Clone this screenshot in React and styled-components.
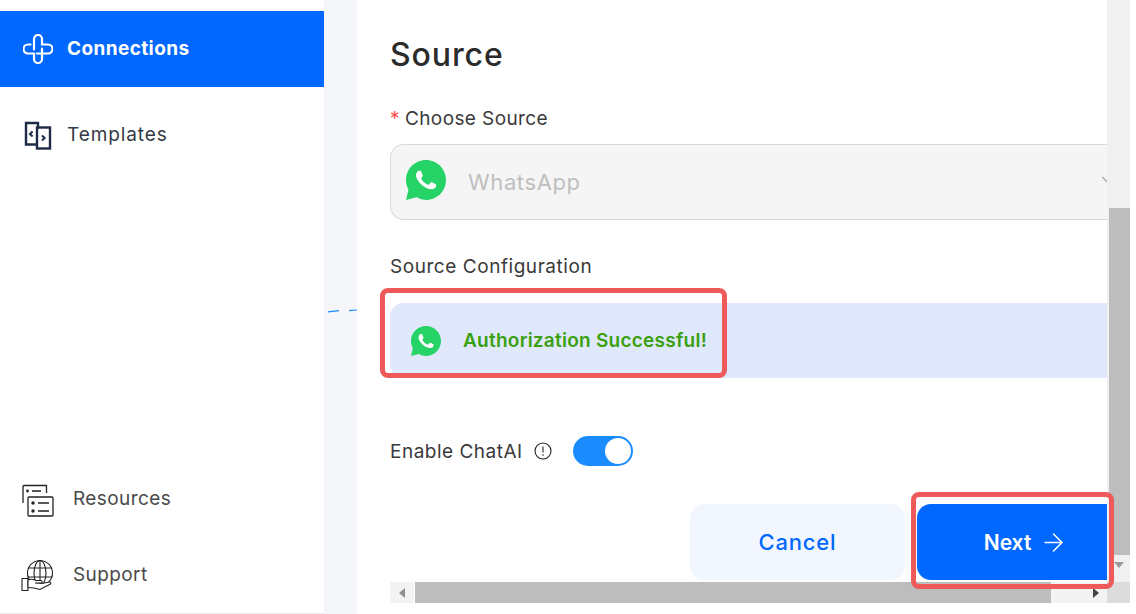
import React from "react";
import styled, { createGlobalStyle } from "styled-components";
import { ArrowRight, ChevronDown } from "lucide-react";

const GlobalStyle = createGlobalStyle`
  html, body {
    margin: 0;
    padding: 0;
    background: #fff;
    overflow: hidden;
  }
  * { box-sizing: border-box; }
`;

const font = `Inter, "Open Sans", "Liberation Sans", sans-serif`;

const WhatsAppIcon = ({ size }) => (
  <svg width={size} height={size} viewBox="0 0 24 24">
    <path
      fill="#25d366"
      d="M12 0C5.373 0 0 5.373 0 12c0 2.117.55 4.1 1.51 5.83L0 24l6.3-1.65A11.95 11.95 0 0 0 12 24c6.627 0 12-5.373 12-12S18.627 0 12 0z"
    />
    <path
      fill="#fff"
      d="M17.472 14.382c-.297-.149-1.758-.867-2.03-.967-.273-.099-.471-.148-.67.15-.197.297-.767.966-.94 1.164-.173.199-.347.223-.644.075-.297-.15-1.255-.463-2.39-1.475-.883-.788-1.48-1.761-1.653-2.059-.173-.297-.018-.458.13-.606.134-.133.298-.347.446-.52.149-.174.198-.298.298-.497.099-.198.05-.371-.025-.52-.075-.149-.669-1.612-.916-2.207-.242-.579-.487-.5-.669-.51-.173-.008-.371-.01-.57-.01-.198 0-.52.074-.792.372-.272.297-1.04 1.016-1.04 2.479 0 1.462 1.065 2.875 1.213 3.074.149.198 2.096 3.2 5.077 4.487.709.306 1.262.489 1.694.625.712.227 1.36.195 1.871.118.571-.085 1.758-.719 2.006-1.413.248-.694.248-1.289.173-1.413-.074-.124-.272-.198-.57-.347"
    />
  </svg>
);

const ConnectionsIcon = () => (
  <svg width="30" height="30" viewBox="0 0 30 30" fill="none" stroke="#fff" strokeWidth="2.200" strokeLinecap="round">
    <path d="M11 15.500V5a4 4 0 0 1 8 0v5.500h6a4.500 4.500 0 0 1 0 9H14" />
    <path d="M19 14.500V25a4 4 0 0 1-8 0v-5.500H5a4.500 4.500 0 0 1 0-9h2.500" />
  </svg>
);

const TemplatesIcon = () => (
  <svg width="28" height="29" viewBox="0 0 28 29" fill="none" stroke="#1d2b45" strokeWidth="2.400">
    <path d="M13 23.500H2V2h12v6" />
    <rect x="13" y="6.500" width="13" height="21" />
    <path d="M8.600 10.500 6 13l2.600 2.500M18 14.500l2.600 2.500-2.600 2.500" strokeWidth="2" />
  </svg>
);

const ResourcesIcon = () => (
  <svg width="33" height="33" viewBox="0 0 33 33" fill="none" stroke="#222" strokeWidth="1.300">
    <path d="M2 19V2.500c0-.5.3-1 1-1h22.500V9" />
    <rect x="7" y="13" width="25" height="19" rx="1" />
    <path d="M11 7h9M17 19h11M17 27h11" strokeWidth="1.500" />
    <circle cx="6.500" cy="7" r="1.400" fill="#222" stroke="none" />
    <circle cx="12" cy="19" r="1.700" fill="#222" stroke="none" />
    <circle cx="12" cy="27" r="1.700" fill="#222" stroke="none" />
  </svg>
);

const SupportIcon = () => (
  <svg width="34" height="34" viewBox="0 0 34 34" fill="none" stroke="#222" strokeWidth="1.100">
    <circle cx="19" cy="13" r="12.500" />
    <ellipse cx="19" cy="13" rx="6" ry="12.500" />
    <path d="M19 .5v25M7 8h24M6.500 17h25" />
    <path fill="#fff" d="M1 18.500h6v12H1z" />
    <path fill="#fff" d="M7 20c3-1.500 6-.5 8 .5h5c1.500 0 1.500 2.500 0 2.500h-6l7 .5 7-1.500c2-.3 2.500 1.300 1 2.200l-10 5.300-6-1.500-6-.5z" />
  </svg>
);

const InfoIcon = () => (
  <svg width="18" height="18" viewBox="0 0 18 18" fill="none" stroke="#222" strokeWidth="1.100">
    <circle cx="9" cy="9" r="8" />
    <path d="M9 4.500v6" />
    <circle cx="9" cy="13" r=".8" fill="#222" stroke="none" />
  </svg>
);

const App = () => {
  return (
    <Stage>
      <GlobalStyle />
      <Sidebar>
        <NavGroup>
          <NavItem $active>
            <IconSlot $left={23}>
              <ConnectionsIcon />
            </IconSlot>
            <NavLabel>Connections</NavLabel>
          </NavItem>
          <NavItem>
            <IconSlot $left={24}>
              <TemplatesIcon />
            </IconSlot>
            <NavLabel $spacing={0.9}>Templates</NavLabel>
          </NavItem>
        </NavGroup>
        <NavGroup>
          <NavItem $lower>
            <IconSlot $left={21} $lower>
              <ResourcesIcon />
            </IconSlot>
            <NavLabel>Resources</NavLabel>
          </NavItem>
          <NavItem $lower>
            <IconSlot $left={21} $lower>
              <SupportIcon />
            </IconSlot>
            <NavLabel>Support</NavLabel>
          </NavItem>
        </NavGroup>
      </Sidebar>

      <Gutter>
        <svg width="33" height="4" viewBox="0 0 33 4">
          <path d="M4 2.800 15 1.700M25 1.700 33 1" stroke="#1a8cff" strokeWidth="1.200" />
        </svg>
      </Gutter>

      <Workspace>
        <WorkRow>
          <Panel>
            <Title>Source</Title>
            <FieldLabel>
              <Required>*</Required>Choose Source
            </FieldLabel>
            <SelectBox>
              <WhatsAppIcon size={40} />
              <SelectText>WhatsApp</SelectText>
              <SelectArrow>
                <ChevronDown size={22} strokeWidth={1.500} />
              </SelectArrow>
            </SelectBox>
            <ConfigLabel>Source Configuration</ConfigLabel>
            <AuthBanner>
              <WhatsAppIcon size={30} />
              <AuthText>Authorization Successful!</AuthText>
            </AuthBanner>
            <ToggleRow>
              <ToggleLabel>Enable ChatAI</ToggleLabel>
              <InfoIcon />
              <Toggle>
                <Knob />
              </Toggle>
            </ToggleRow>
            <Actions>
              <CancelButton>Cancel</CancelButton>
              <NextButton>
                Next
                <ArrowRight size={29} strokeWidth={1.300} />
              </NextButton>
            </Actions>
          </Panel>
          <VScroll>
            <VThumb />
            <ArrowDown />
          </VScroll>
        </WorkRow>
        <HScroll>
          <HButton>
            <ArrowLeft />
          </HButton>
          <HThumb />
          <HTrack>
            <ArrowRightTip />
          </HTrack>
          <Corner />
        </HScroll>
      </Workspace>

      <Highlight $left={380} $top={288} $width={347} $height={90} />
      <Highlight $left={911} $top={492} $width={203} $height={97} />
    </Stage>
  );
};

export default App;

const Stage = styled.div`
  position: relative;
  display: flex;
  width: 1136px;
  height: 614px;
  overflow: hidden;
  background: #fff;
  font-family: ${font};
`;

const Sidebar = styled.aside`
  width: 324px;
  height: 614px;
  padding: 11px 0 5px;
  display: flex;
  flex-direction: column;
  justify-content: space-between;
  border-bottom: 1px solid #e9ebef;
  flex-shrink: 0;
`;

const NavGroup = styled.nav`
  display: flex;
  flex-direction: column;
  gap: 10px;
`;

const NavItem = styled.div`
  display: flex;
  align-items: center;
  height: ${(p) => (p.$lower ? "66px" : "76px")};
  background: ${(p) => (p.$active ? "#0068ff" : "transparent")};
  color: ${(p) => (p.$active ? "#fff" : p.$lower ? "#4a4a4a" : "#333a45")};
  font-size: 19px;
  font-weight: ${(p) => (p.$active ? 700 : 400)};
  letter-spacing: 0.400px;
`;

const NavLabel = styled.span`
  padding-bottom: 2px;
  letter-spacing: ${(p) => (p.$spacing ? `${p.$spacing}px` : "inherit")};
`;

const IconSlot = styled.span`
  display: flex;
  align-items: center;
  padding-left: ${(p) => p.$left}px;
  padding-top: ${(p) => (p.$lower ? 3 : 0)}px;
  width: ${(p) => (p.$lower ? 73 : 67)}px;
  flex-shrink: 0;
`;

const Gutter = styled.div`
  width: 33px;
  flex-shrink: 0;
  padding-top: 309px;
  background: #f5f6fa;
  svg { display: block; }
`;

const Workspace = styled.div`
  width: 773px;
  flex-shrink: 0;
  display: flex;
  flex-direction: column;
`;

const WorkRow = styled.div`
  display: flex;
  height: 582px;
`;

const Panel = styled.section`
  width: 750px;
  height: 582px;
  padding: 34px 0 0 33px;
  overflow: hidden;
  background: #fff;
`;

const Title = styled.h1`
  margin: 0;
  height: 42px;
  font-size: 32px;
  line-height: 42px;
  font-weight: 500;
  letter-spacing: 0.900px;
  color: #2b2b2b;
`;

const FieldLabel = styled.div`
  margin-top: 29px;
  height: 28px;
  font-size: 19px;
  line-height: 28px;
  color: #3a3a3a;
  letter-spacing: 0.400px;
`;

const Required = styled.span`
  color: #ff4d4f;
  margin-right: 5px;
`;

const SelectBox = styled.div`
  display: flex;
  align-items: center;
  width: 740px;
  height: 76px;
  margin-top: 11px;
  padding-left: 15px;
  background: #f5f5f5;
  border: 1px solid #d9d9d9;
  border-right: none;
  border-radius: 14px 0 0 14px;
  & > svg { margin-top: -4px; }
`;

const SelectText = styled.span`
  margin-left: 22px;
  font-size: 22px;
  color: #bfbfbf;
  letter-spacing: 0.600px;
`;

const SelectArrow = styled.span`
  display: flex;
  margin: -4px 11px 0 auto;
  color: #aaa;
`;

const ConfigLabel = styled.div`
  margin-top: 33px;
  height: 28px;
  font-size: 19px;
  line-height: 28px;
  color: #3a3a3a;
  letter-spacing: 0.550px;
`;

const AuthBanner = styled.div`
  display: flex;
  align-items: center;
  gap: 22px;
  width: 717px;
  height: 75px;
  margin-top: 22px;
  padding-left: 21px;
  background: #dfe9fb;
  border-radius: 14px 0 0 14px;
`;

const AuthText = styled.span`
  font-size: 19px;
  font-weight: 600;
  letter-spacing: 0.250px;
  color: #3aa010;
`;

const ToggleRow = styled.div`
  display: flex;
  align-items: center;
  height: 30px;
  margin-top: 58px;
`;

const ToggleLabel = styled.span`
  font-size: 19px;
  color: #3a3a3a;
  letter-spacing: 0.500px;
  margin-right: 11px;
`;

const Toggle = styled.div`
  display: flex;
  justify-content: flex-end;
  align-items: center;
  width: 60px;
  height: 30px;
  margin-left: 21px;
  padding-right: 2px;
  border-radius: 15px;
  background: #1a8cff;
`;

const Knob = styled.span`
  width: 26px;
  height: 26px;
  border-radius: 50%;
  background: #fff;
`;

const Actions = styled.div`
  display: flex;
  justify-content: flex-end;
  gap: 12px;
  margin-top: 38px;
`;

const CancelButton = styled.button`
  width: 215px;
  height: 76px;
  border: none;
  border-radius: 14px;
  background: #f2f7ff;
  color: #0068ff;
  font-family: ${font};
  font-size: 22px;
  font-weight: 500;
  letter-spacing: 0.800px;
`;

const NextButton = styled.button`
  display: flex;
  align-items: center;
  justify-content: center;
  gap: 8px;
  width: 190px;
  height: 76px;
  padding: 0 0 0 28px;
  border: none;
  border-radius: 14px 0 0 14px;
  background: #0068ff;
  color: #fff;
  font-family: ${font};
  font-size: 21px;
  font-weight: 600;
`;

const VScroll = styled.div`
  width: 23px;
  height: 582px;
  padding: 208px 0 0 2px;
  background: #f0f0f0;
`;

const VThumb = styled.div`
  width: 21px;
  height: 347px;
  background: #bdbdbd;
`;

const ArrowDown = styled.div`
  width: 0;
  height: 0;
  margin: 7px 0 0 5px;
  border-left: 5px solid transparent;
  border-right: 5px solid transparent;
  border-top: 6px solid #9a9a9a;
`;

const HScroll = styled.div`
  display: flex;
  height: 21px;
  margin-left: 33px;
`;

const HButton = styled.div`
  display: flex;
  align-items: center;
  justify-content: center;
  width: 24px;
  background: #f3f3f3;
`;

const ArrowLeft = styled.span`
  border-top: 5px solid transparent;
  border-bottom: 5px solid transparent;
  border-right: 6px solid #8f8f8f;
`;

const HThumb = styled.div`
  width: 636px;
  margin-left: 1px;
  background: #bdbdbd;
`;

const HTrack = styled.div`
  display: flex;
  align-items: center;
  justify-content: flex-end;
  width: 56px;
  padding-right: 8px;
  background: #f3f3f3;
`;

const ArrowRightTip = styled.span`
  border-top: 5px solid transparent;
  border-bottom: 5px solid transparent;
  border-left: 6px solid #444;
`;

const Corner = styled.div`
  width: 23px;
  background: #dcdcdc;
`;

const Highlight = styled.div`
  position: absolute;
  left: ${(p) => p.$left}px;
  top: ${(p) => p.$top}px;
  width: ${(p) => p.$width}px;
  height: ${(p) => p.$height}px;
  border: 5px solid #ee5a5a;
  border-radius: 8px;
  pointer-events: none;
`;
